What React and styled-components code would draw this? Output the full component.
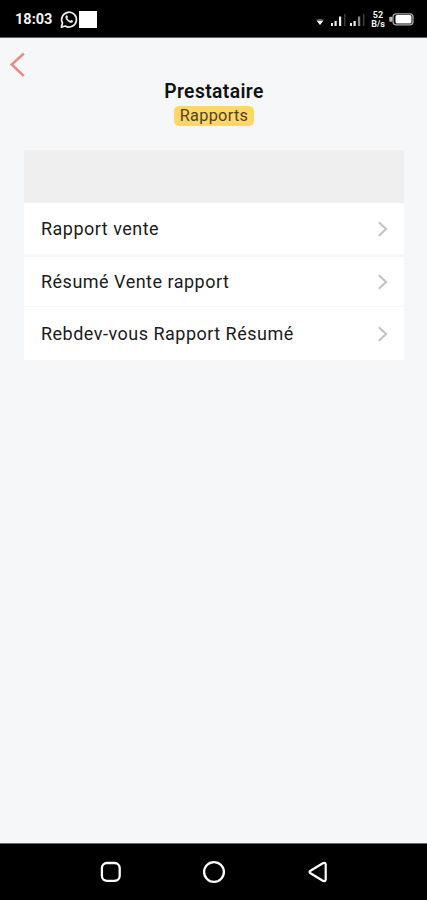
import React from "react";
import styled, { createGlobalStyle } from "styled-components";

const GlobalStyle = createGlobalStyle`
  *, *::before, *::after { box-sizing: border-box; }
  body { margin: 0; background: #f5f7f9; font-family: Roboto, "Noto Sans", sans-serif; }
`;

const Screen = styled.div`
  display: flex;
  flex-direction: column;
  width: 100%;
  height: 100vh;
  overflow: hidden;
  background: #f5f7f9;
`;

const StatusBar = styled.header`
  display: flex;
  flex: none;
  align-items: center;
  justify-content: space-between;
  height: 38px;
  padding: 2px 13px 0 15px;
  background: #000;
  color: #f4f4f4;
  border-bottom: 1px solid #5f6061;
`;

const StatusGroup = styled.div`
  display: flex;
  align-items: center;
`;

const Clock = styled.span`
  width: 45px;
  padding-top: 1px;
  font-size: 14.5px;
  font-weight: 700;
  line-height: 18px;
`;

const Notice = styled.span`
  width: 18px;
  height: 17px;
  margin-left: 1px;
  background: #fff;
`;

const NetSpeed = styled.span`
  display: flex;
  flex-direction: column;
  width: 16px;
  margin: 0 3px 0 4px;
  font-size: 9px;
  font-weight: 700;
  line-height: 9px;
  text-align: center;
`;

const Icon = styled.svg`
  display: block;
  flex: none;
  overflow: visible;
`;

const Content = styled.main`
  display: flex;
  flex: 1;
  flex-direction: column;
  padding: 13px 23px 0 24px;
`;

const BackButton = styled.button`
  align-self: flex-start;
  height: 27px;
  margin: 0 0 0 -15px;
  padding: 0;
  border: 0;
  background: none;
`;

const Heading = styled.div`
  display: flex;
  flex-direction: column;
  align-items: center;
  height: 72px;
`;

const Title = styled.h1`
  margin: 3px 0;
  color: #111;
  font-size: 19.3px;
  font-weight: 600;
  line-height: 22px;
  letter-spacing: 0.4px;
`;

const Badge = styled.span`
  width: 80px;
  height: 20px;
  border-radius: 5px;
  background: #fed766;
  color: #50431f;
  font-size: 16.3px;
  line-height: 20px;
  letter-spacing: 0.3px;
  text-align: center;
`;

const List = styled.ul`
  margin: 0;
  padding: 0;
  list-style: none;
`;

const ListHeader = styled.li`
  height: 53px;
  background: #efefef;
`;

const Row = styled.li`
  display: flex;
  align-items: center;
  justify-content: space-between;
  height: ${(p) => p.$height}px;
  margin-bottom: ${(p) => p.$gap}px;
  padding: 0 16px 0 17px;
  background: #fff;
  color: #1b1b1b;
  font-size: 18px;
  line-height: 24px;
  letter-spacing: 0.49px;
`;

const NavBar = styled.nav`
  display: grid;
  grid-template-columns: repeat(3, 22px);
  flex: none;
  align-items: center;
  justify-content: center;
  column-gap: 81.5px;
  height: 57px;
  border-top: 1px solid #6b6c6d;
  background: #000;
`;

const reports = [
  { label: "Rapport vente", height: 51, gap: 3 },
  { label: "Résumé Vente rapport", height: 49, gap: 1 },
  { label: "Rebdev-vous Rapport Résumé", height: 53, gap: 0 },
];

function WhatsAppIcon() {
  return (
    <Icon width="18" height="18" viewBox="0 0.5 18 18" fill="none" stroke="#eee">
      <path d="M1.4 16.6l1.1-4A7.4 7.4 0 1 1 5.3 15.500Z" strokeWidth="1.7" strokeLinejoin="round" />
      <path
        d="M6.1 5.1c.6-.7 1.1-.4 1.4.3l.4 1c.2.4-.4.8-.6 1.2.7 1.4 1.700 2.200 3 2.800.4-.2.700-.9 1.200-.8l1.300.7c.5.300.2 1.200-.4 1.600-1.200.8-3 .1-4.300-.9-1.400-1.100-2.700-2.800-2.700-4.200 0-.6.3-1.200.700-1.700Z"
        fill="#eee"
        stroke="none"
      />
    </Icon>
  );
}

function SignalIcon({ dim = false }) {
  return (
    <Icon width="16" height="12" viewBox="0 0 16 12" fill="#eee">
      <rect x="0" y="9" width="2" height="3" />
      <rect x="3.500" y="7" width="2.200" height="5" />
      <rect x="8" y="2.500" width="2.200" height="9.500" fill={dim ? "#888" : "#eee"} />
      <rect x="13" y="0" width="1.500" height="12" fill="#3b3b3b" />
    </Icon>
  );
}

const WifiSlot = styled.span`
  display: flex;
  margin: 5px 7px 0 0;
`;

const SignalSlot = styled.span`
  display: flex;
  margin-right: 3px;
`;

function Chevron() {
  return (
    <Icon width="10" height="16" viewBox="0 0 10 16" fill="none" stroke="#c3c3c3" strokeWidth="2.1">
      <path d="M.8 1.200L8.100 8 .8 14.800" />
    </Icon>
  );
}

export default function App() {
  return (
    <>
      <GlobalStyle />
      <Screen>
        <StatusBar>
          <StatusGroup>
            <Clock>18:03</Clock>
            <WhatsAppIcon />
            <Notice />
          </StatusGroup>
          <StatusGroup>
            <WifiSlot>
              <Icon width="8" height="6" viewBox="0 0 8 6">
                <path d="M.2.600Q4-.5 7.800.600L7 2.200H1Z" fill="#666" />
                <path d="M.800 2H7.200L4 6Z" fill="#fff" />
              </Icon>
            </WifiSlot>
            <SignalSlot><SignalIcon /></SignalSlot>
            <SignalIcon dim />
            <NetSpeed>
              <span>52</span>
              <span>B/s</span>
            </NetSpeed>
            <Icon width="25" height="14" viewBox="0 0.700 25 14">
              <rect x="4" y="1.500" width="20" height="11" rx="3" fill="none" stroke="#aaa" strokeWidth="1.300" />
              <rect x="0.300" y="4.500" width="3" height="5" rx="1" fill="#bbb" />
              <rect x="6.500" y="2.700" width="16" height="8.600" rx="1.500" fill="#fff" />
            </Icon>
          </StatusGroup>
        </StatusBar>
        <Content>
          <BackButton aria-label="Retour">
            <Icon width="17" height="27" viewBox="0 0 17 27" fill="none" stroke="#e98b88" strokeWidth="2.500">
              <path d="M14.800 2.500L2.700 13.500 14.800 25" />
            </Icon>
          </BackButton>
          <Heading>
            <Title>Prestataire</Title>
            <Badge>Rapports</Badge>
          </Heading>
          <List>
            <ListHeader />
            {reports.map((report) => (
              <Row key={report.label} $height={report.height} $gap={report.gap}>
                <span>{report.label}</span>
                <Chevron />
              </Row>
            ))}
          </List>
        </Content>
        <NavBar>
          <Icon width="22" height="22" viewBox="-1 0 22 22" fill="none" stroke="#fff" strokeWidth="2.300">
            <rect x="1.900" y="2" width="17.800" height="17.800" rx="5" />
          </Icon>
          <Icon width="22" height="22" viewBox="0 0 22 22" fill="none" stroke="#fff" strokeWidth="2.300">
            <circle cx="11" cy="11" r="9.900" />
          </Icon>
          <Icon width="22" height="22" viewBox="-2 0 22 22" fill="none" stroke="#fff" strokeWidth="2.200">
            <path d="M2.500 9.700L14.800 2.200Q17.700.9 17.700 3.800V18.200Q17.700 21.100 14.800 19.800L2.500 12.300Q.6 11 2.500 9.700Z" strokeLinejoin="round" />
          </Icon>
        </NavBar>
      </Screen>
    </>
  );
}
